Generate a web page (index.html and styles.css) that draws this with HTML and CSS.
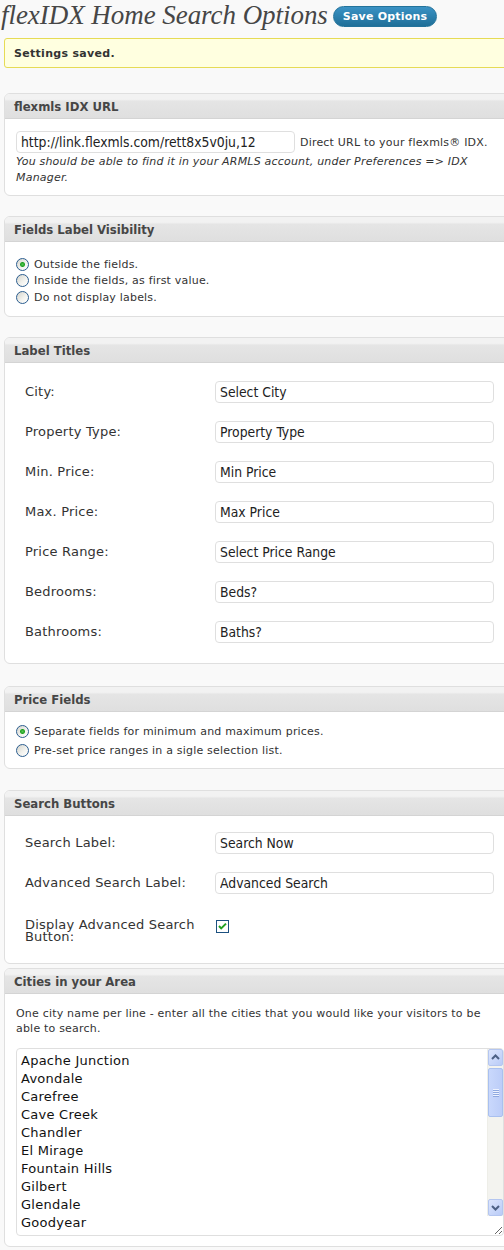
FILE: index.html
```html
<!DOCTYPE html>
<html lang="en">
<head>
<meta charset="utf-8">
<title>flexIDX Home Search Options</title>
<link rel="stylesheet" href="styles.css">
</head>
<body>
<div class="wrap">
  <div class="title-row">
    <h2 class="page-title">flexIDX Home Search Options</h2>
    <button class="button-primary" type="button">Save Options</button>
  </div>

  <div class="notice"><p>Settings saved.</p></div>

  <div class="panel">
    <h3 class="panel-head">flexmls IDX URL</h3>
    <div class="panel-body url-body">
      <div class="url-line">
        <input class="text url-input" type="text" value="http://link.flexmls.com/rett8x5v0ju,12">
        <span class="hint">Direct URL to your flexmls® IDX.</span>
      </div>
      <p class="desc">You should be able to find it in your ARMLS account, under Preferences =&gt; IDX Manager.</p>
    </div>
  </div>

  <div class="panel">
    <h3 class="panel-head">Fields Label Visibility</h3>
    <div class="panel-body radio-body">
      <label class="radio-row"><input type="radio" name="vis" checked> Outside the fields.</label>
      <label class="radio-row"><input type="radio" name="vis"> Inside the fields, as first value.</label>
      <label class="radio-row"><input type="radio" name="vis"> Do not display labels.</label>
    </div>
  </div>

  <div class="panel">
    <h3 class="panel-head">Label Titles</h3>
    <div class="panel-body fields-body">
      <div class="field-row"><span class="field-label">City:</span><input class="text field-input" type="text" value="Select City"></div>
      <div class="field-row"><span class="field-label">Property Type:</span><input class="text field-input" type="text" value="Property Type"></div>
      <div class="field-row"><span class="field-label">Min. Price:</span><input class="text field-input" type="text" value="Min Price"></div>
      <div class="field-row"><span class="field-label">Max. Price:</span><input class="text field-input" type="text" value="Max Price"></div>
      <div class="field-row"><span class="field-label">Price Range:</span><input class="text field-input" type="text" value="Select Price Range"></div>
      <div class="field-row"><span class="field-label">Bedrooms:</span><input class="text field-input" type="text" value="Beds?"></div>
      <div class="field-row"><span class="field-label">Bathrooms:</span><input class="text field-input" type="text" value="Baths?"></div>
    </div>
  </div>

  <div class="panel panel-price">
    <h3 class="panel-head">Price Fields</h3>
    <div class="panel-body radio-body price-body">
      <label class="radio-row"><input type="radio" name="price" checked> Separate fields for minimum and maximum prices.</label>
      <label class="radio-row"><input type="radio" name="price"> Pre-set price ranges in a sigle selection list.</label>
    </div>
  </div>

  <div class="panel panel-tight">
    <h3 class="panel-head">Search Buttons</h3>
    <div class="panel-body fields-body buttons-body">
      <div class="field-row"><span class="field-label">Search Label:</span><input class="text field-input" type="text" value="Search Now"></div>
      <div class="field-row"><span class="field-label">Advanced Search Label:</span><input class="text field-input" type="text" value="Advanced Search"></div>
      <div class="field-row field-row-top">
        <span class="field-label two-line">Display Advanced Search Button:</span>
        <span class="check" role="checkbox" aria-checked="true">
          <svg width="11" height="11" viewBox="0 0 11 11"><polyline points="2,5 4.2,7.4 9,2.6" fill="none" stroke="#21a121" stroke-width="2"/></svg>
        </span>
      </div>
    </div>
  </div>

  <div class="panel">
    <h3 class="panel-head">Cities in your Area</h3>
    <div class="panel-body cities-body">
      <p class="cities-desc">One city name per line - enter all the cities that you would like your visitors to be able to search.</p>
      <div class="ta-wrap">
        <textarea class="cities" rows="10">Apache Junction
Avondale
Carefree
Cave Creek
Chandler
El Mirage
Fountain Hills
Gilbert
Glendale
Goodyear
Laveen
Litchfield Park
Mesa
Paradise Valley
Peoria
Phoenix
Queen Creek
Scottsdale
Sun City
Sun City West
Sun Lakes
Surprise
Tempe
Tolleson
Wickenburg
Youngtown
Buckeye
Maricopa
Anthem
Gold Canyon</textarea>
        <div class="sb" aria-hidden="true">
          <div class="sb-btn">
            <svg width="13" height="15" viewBox="0 0 13 15"><polyline points="3,9 6.5,5.5 10,9" fill="none" stroke="#4d6185" stroke-width="2"/></svg>
          </div>
          <div class="sb-thumb">
            <span class="grip"></span><span class="grip"></span><span class="grip"></span><span class="grip"></span>
          </div>
          <div class="sb-track"></div>
          <div class="sb-btn">
            <svg width="13" height="15" viewBox="0 0 13 15"><polyline points="3,6 6.5,9.5 10,6" fill="none" stroke="#4d6185" stroke-width="2"/></svg>
          </div>
        </div>
      </div>
    </div>
  </div>
</div>
</body>
</html>
```

FILE: styles.css
```css
html, body {
  margin: 0;
  padding: 0;
  background: #f9f9f9;
}
body {
  font-family: "DejaVu Sans", Verdana, sans-serif;
  font-size: 11px;
  letter-spacing: 0.2px;
  color: #333;
  overflow-x: hidden;
}
.wrap {
  width: 540px;
}
.title-row {
  display: flex;
  align-items: center;
  height: 34px;
}
.page-title {
  margin: -4px 0 0;
  font-family: "Liberation Serif", Georgia, serif;
  font-style: italic;
  font-weight: normal;
  font-size: 27px;
  letter-spacing: -0.05px;
  color: #464646;
  line-height: 30px;
  padding-left: 1px;
}
.button-primary {
  margin-left: 5px;
  margin-top: -1px;
  height: 21px;
  padding: 0 9px;
  border: 1px solid #23739b;
  border-radius: 11px;
  background: linear-gradient(#3a92c4, #1f6f98);
  color: #fff;
  font-family: "DejaVu Sans", Verdana, sans-serif;
  font-weight: bold;
  font-size: 11px;
  letter-spacing: 0.2px;
  line-height: 19px;
}
.notice {
  margin: 4px 0 0 4px;
  border: 1px solid #e6db55;
  border-radius: 3px;
  background: #ffffe0;
  height: 28px;
  display: flex;
  align-items: center;
}
.notice p {
  margin: 0;
  padding-left: 9px;
  font-weight: bold;
  font-size: 11px;
  letter-spacing: 0.3px;
  color: #333;
}
.panel {
  margin: 25px 0 0 4px;
  border: 1px solid #dfdfdf;
  border-radius: 6px 0 0 6px;
  background: #fff;
  overflow: hidden;
}
.panel + .panel {
  margin-top: 20px;
}
.panel + .panel-price {
  margin-top: 22px;
}
.panel-price + .panel {
  margin-top: 21px;
}
.panel-tight + .panel {
  margin-top: 4px;
}
.panel-head {
  margin: 0;
  height: 24px;
  line-height: 27px;
  padding-left: 9px;
  font-size: 11.7px;
  letter-spacing: 0;
  font-weight: bold;
  color: #464646;
  background: linear-gradient(#f2f2f2 0, #f2f2f2 22%, #e5e5e5 30%, #dfdfdf 100%);
  border-bottom: 1px solid #d4d4d4;
}
.panel-body {
  padding: 0 0 0 11px;
}
.text {
  box-sizing: border-box;
  height: 22px;
  border: 1px solid #dfdfdf;
  border-radius: 4px;
  background: #fff;
  padding: 0 4px;
  margin: 0;
  font-family: "DejaVu Sans Condensed", "DejaVu Sans", sans-serif;
  font-stretch: condensed;
  font-size: 13.8px;
  letter-spacing: 0;
  color: #222;
}
.url-body {
  padding-top: 12px;
  padding-bottom: 9px;
}
.url-line {
  display: flex;
  align-items: center;
  gap: 5px;
}
.url-input {
  width: 279px;
}
.desc {
  margin: 1px 0 0;
  font-style: italic;
  line-height: 16px;
  width: 480px;
}
.radio-body {
  padding-top: 14px;
  padding-bottom: 10px;
}
.price-body {
  padding-top: 10px;
  padding-bottom: 8px;
}
.radio-row {
  display: flex;
  align-items: center;
  height: 16.5px;
}
.price-body .radio-row {
  height: 19px;
}
.radio-row input {
  appearance: none;
  -webkit-appearance: none;
  box-sizing: border-box;
  width: 13px;
  height: 13px;
  margin: 0 5px 0 0;
  border: 1px solid #2b5d8f;
  border-radius: 50%;
  background: linear-gradient(135deg, #d4d4cc 0%, #f4f4f0 60%, #ffffff 100%);
}
.radio-row input:checked {
  background:
    radial-gradient(circle at 50% 50%, #55c755 0, #21a121 2px, rgba(33,161,33,0) 3px),
    linear-gradient(135deg, #d4d4cc 0%, #f4f4f0 60%, #ffffff 100%);
}
.fields-body {
  padding: 9px 0 11px 0;
}
.buttons-body {
  padding-top: 7px;
  padding-bottom: 11px;
}
.field-row {
  display: flex;
  align-items: center;
  padding: 9px 0 9px 20px;
}
.field-row-top {
  align-items: flex-start;
  padding-top: 16px;
}
.field-label {
  width: 190px;
  flex: none;
  font-size: 13px;
  letter-spacing: 0.2px;
}
.two-line {
  line-height: 12px;
  width: 180px;
  margin-right: 10px;
}
.field-input {
  width: 279px;
}
.check {
  box-sizing: border-box;
  display: flex;
  align-items: center;
  justify-content: center;
  width: 13px;
  height: 13px;
  margin: 1px 0 0 1px;
  border: 1px solid #1c5180;
  background: #fff;
}
.cities-body {
  padding: 12px 0 10px 11px;
}
.cities-desc {
  margin: 0 0 12px;
  line-height: 15px;
  width: 480px;
}
.ta-wrap {
  position: relative;
  width: 488px;
}
.cities {
  display: block;
  box-sizing: border-box;
  width: 488px;
  height: 188px;
  margin: 0;
  padding: 3px 20px 0 4px;
  border: 1px solid #dfdfdf;
  border-radius: 4px;
  overflow: hidden;
  font-family: "DejaVu Sans", sans-serif;
  font-size: 13px;
  letter-spacing: 0.25px;
  line-height: 18px;
  color: #111;
  resize: both;
}
.sb {
  position: absolute;
  top: 1px;
  right: 1px;
  width: 15px;
  height: 167px;
  display: flex;
  flex-direction: column;
  background: #f3f3ef;
  border-left: 1px solid #eeeee8;
}
.sb-btn {
  box-sizing: border-box;
  height: 17px;
  display: flex;
  align-items: center;
  justify-content: center;
  border: 1px solid #b4c6f0;
  border-radius: 2px;
  background: linear-gradient(135deg, #dde6fd, #b9cbf7);
}
.sb-thumb {
  box-sizing: border-box;
  height: 49px;
  margin-top: 2px;
  display: flex;
  flex-direction: column;
  align-items: center;
  justify-content: center;
  gap: 1px;
  border: 1px solid #a9c0ef;
  border-radius: 2px;
  background: linear-gradient(90deg, #c9d8fc, #bccdf8);
}
.grip {
  display: block;
  width: 6px;
  height: 1px;
  background: #eef3ff;
  box-shadow: 0 1px 0 #8fa9e0;
}
.sb-track {
  flex: 1;
}
```
